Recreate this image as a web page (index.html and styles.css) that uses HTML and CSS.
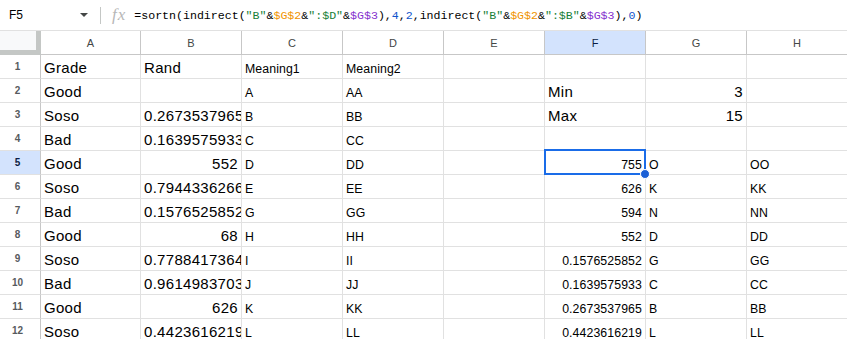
FILE: index.html
```html
<!DOCTYPE html>
<html lang="en"><head>
  <meta name="viewport" content="width=device-width, initial-scale=1.0">
  <title>Sheet</title>
  <link rel="stylesheet" href="styles.css">
</head>
<body>
  <!-- Formula bar -->
  <div class="formula-bar">
    <div class="namebox"><span>F5</span><span class="caret"></span></div>
    <div class="sep"></div>
    <div class="fx">fx</div>
    <div class="formula">=sortn(indirect(<span class="str">"B"</span>&amp;<span class="ref1">$G$2</span>&amp;<span class="str">":$D"</span>&amp;<span class="ref2">$G$3</span>),<span class="num">4</span>,<span class="num">2</span>,indirect(<span class="str">"B"</span>&amp;<span class="ref1">$G$2</span>&amp;<span class="str">":$B"</span>&amp;<span class="ref2">$G$3</span>),<span class="num">0</span>)</div>
  </div>

  <!-- Grid -->
  <div class="grid">
    <div class="corner"></div>
    <div class="hd">A</div><div class="hd">B</div><div class="hd">C</div><div class="hd">D</div>
    <div class="hd">E</div><div class="hd sel">F</div><div class="hd">G</div><div class="hd">H</div>

    <div class="rh">1</div>
    <div class="cell">Grade</div><div class="cell">Rand</div><div class="cell sm">Meaning1</div><div class="cell sm">Meaning2</div>
    <div class="cell"></div><div class="cell"></div><div class="cell"></div><div class="cell"></div>

    <div class="rh">2</div>
    <div class="cell">Good</div><div class="cell"></div><div class="cell sm">A</div><div class="cell sm">AA</div>
    <div class="cell"></div><div class="cell">Min</div><div class="cell r">3</div><div class="cell"></div>

    <div class="rh">3</div>
    <div class="cell">Soso</div><div class="cell">0.2673537965</div><div class="cell sm">B</div><div class="cell sm">BB</div>
    <div class="cell"></div><div class="cell">Max</div><div class="cell r">15</div><div class="cell"></div>

    <div class="rh">4</div>
    <div class="cell">Bad</div><div class="cell">0.1639575933</div><div class="cell sm">C</div><div class="cell sm">CC</div>
    <div class="cell"></div><div class="cell"></div><div class="cell"></div><div class="cell"></div>

    <div class="rh sel">5</div>
    <div class="cell">Good</div><div class="cell r">552</div><div class="cell sm">D</div><div class="cell sm">DD</div>
    <div class="cell"></div><div class="cell sm r active">755<span class="handle"></span></div><div class="cell sm">O</div><div class="cell sm">OO</div>

    <div class="rh">6</div>
    <div class="cell">Soso</div><div class="cell">0.7944336266</div><div class="cell sm">E</div><div class="cell sm">EE</div>
    <div class="cell"></div><div class="cell sm r">626</div><div class="cell sm">K</div><div class="cell sm">KK</div>

    <div class="rh">7</div>
    <div class="cell">Bad</div><div class="cell">0.1576525852</div><div class="cell sm">G</div><div class="cell sm">GG</div>
    <div class="cell"></div><div class="cell sm r">594</div><div class="cell sm">N</div><div class="cell sm">NN</div>

    <div class="rh">8</div>
    <div class="cell">Good</div><div class="cell r">68</div><div class="cell sm">H</div><div class="cell sm">HH</div>
    <div class="cell"></div><div class="cell sm r">552</div><div class="cell sm">D</div><div class="cell sm">DD</div>

    <div class="rh">9</div>
    <div class="cell">Soso</div><div class="cell">0.7788417364</div><div class="cell sm">I</div><div class="cell sm">II</div>
    <div class="cell"></div><div class="cell sm r">0.1576525852</div><div class="cell sm">G</div><div class="cell sm">GG</div>

    <div class="rh">10</div>
    <div class="cell">Bad</div><div class="cell">0.9614983703</div><div class="cell sm">J</div><div class="cell sm">JJ</div>
    <div class="cell"></div><div class="cell sm r">0.1639575933</div><div class="cell sm">C</div><div class="cell sm">CC</div>

    <div class="rh">11</div>
    <div class="cell">Good</div><div class="cell r">626</div><div class="cell sm">K</div><div class="cell sm">KK</div>
    <div class="cell"></div><div class="cell sm r">0.2673537965</div><div class="cell sm">B</div><div class="cell sm">BB</div>

    <div class="rh">12</div>
    <div class="cell">Soso</div><div class="cell">0.4423616219</div><div class="cell sm">L</div><div class="cell sm">LL</div>
    <div class="cell"></div><div class="cell sm r">0.4423616219</div><div class="cell sm">L</div><div class="cell sm">LL</div>
  </div>
</body>
</html>
```
FILE: styles.css
```css
body {
  margin: 0;
  background: #fff;
  font-family: "Liberation Sans", Arial, sans-serif;
  color: #000;
  overflow: hidden;
}

/* formula bar */
.formula-bar {
  display: flex;
  align-items: center;
  height: 30px;
  border-bottom: 1px solid #e1e1e1;
}
.namebox {
  width: 100px;
  box-sizing: border-box;
  display: flex;
  align-items: center;
  padding-left: 9px;
  font-size: 12px;
}
.caret {
  margin-left: auto;
  margin-right: 12px;
  width: 0;
  height: 0;
  border-left: 4px solid transparent;
  border-right: 4px solid transparent;
  border-top: 4px solid #444746;
}
.sep {
  width: 1px;
  height: 17px;
  background: #c4c7c5;
}
.fx {
  margin-left: 11px;
  font-family: "Liberation Serif", serif;
  font-style: italic;
  font-size: 17px;
  letter-spacing: 1px;
  color: #b7b7b7;
}
.formula {
  margin-left: 8px;
  font-family: "Liberation Mono", monospace;
  font-size: 11.6px;
  white-space: nowrap;
  color: #000;
}
.str { color: #188038; }
.ref1 { color: #f09300; }
.ref2 { color: #8430ce; }
.num { color: #1155cc; }

/* grid */
.grid {
  display: grid;
  grid-template-columns: 41px 100px repeat(7, 101px);
  grid-auto-rows: 24px;
  font-size: 15px;
}
.grid > div {
  box-sizing: border-box;
  border-right: 1px solid #e1e1e1;
  border-bottom: 1px solid #e1e1e1;
}
.grid > .corner {
  background: #f8f9fa;
  border-right: 5px solid #c4c7c5;
  border-bottom: 5px solid #c4c7c5;
}
.grid > .hd {
  display: flex;
  align-items: center;
  justify-content: center;
  font-size: 11px;
  color: #444746;
  border-right-color: #c7c7c7;
  border-bottom-color: #c7c7c7;
}
.grid > .rh {
  display: flex;
  align-items: center;
  justify-content: center;
  padding-right: 5px;
  font-size: 10px;
  font-weight: bold;
  color: #575a5e;
  border-right-color: #c7c7c7;
}
.grid > .sel {
  background: #d3e3fd;
  color: #0b1d44;
}
.cell {
  display: flex;
  align-items: flex-end;
  padding: 0 3px 2px;
  white-space: nowrap;
  overflow: hidden;
  letter-spacing: 0.3px;
}
.cell.sm {
  font-size: 12.3px;
  letter-spacing: 0.1px;
}
.cell.r { justify-content: flex-end; }
.cell.active {
  position: relative;
  overflow: visible;
}
.cell.active::before {
  content: "";
  position: absolute;
  top: -2px;
  left: -1px;
  right: -1px;
  bottom: -1px;
  border: 2px solid #1a6ce8;
}
.handle {
  position: absolute;
  right: -5px;
  bottom: -5px;
  width: 8px;
  height: 8px;
  border-radius: 50%;
  background: #1a5fd6;
  border: 1px solid #fff;
  z-index: 2;
}
```
